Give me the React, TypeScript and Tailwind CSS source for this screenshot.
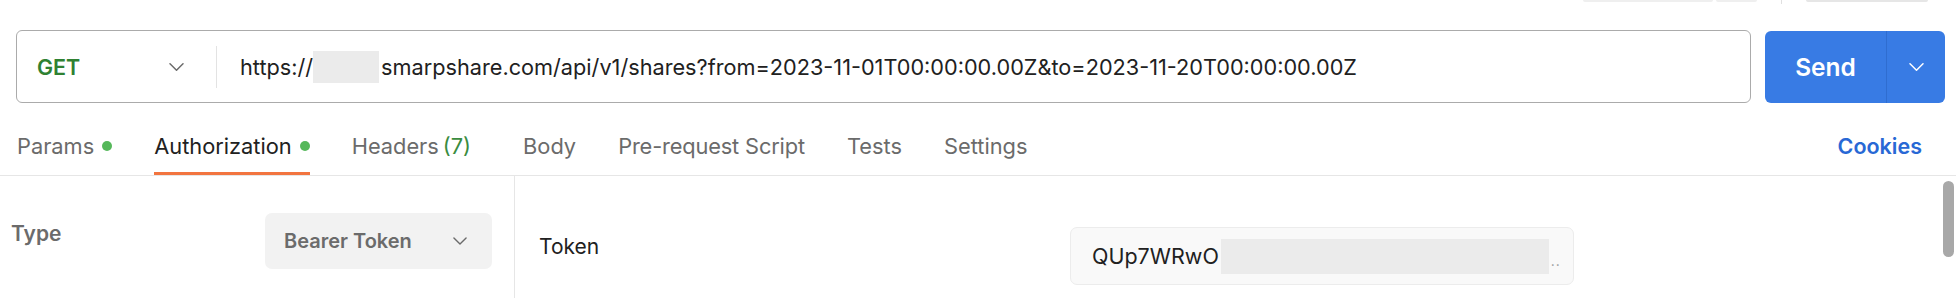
import React from "react";

function Chevron({ color, w = 15, h = 8 }: { color: string; w?: number; h?: number }) {
  return (
    <svg width={w} height={h} viewBox="0 0 15 8" fill="none">
      <polyline points="1,0.8 7.5,7.2 14,0.8" stroke={color} strokeWidth="1.5" strokeLinecap="round" strokeLinejoin="round" />
    </svg>
  );
}

function Tab({ label, active, dot, extra, tight }: { label: string; active?: boolean; dot?: boolean; extra?: React.ReactNode; tight?: boolean }) {
  return (
    <div
      className={`flex h-[55px] items-center border-b-[3px] ${active ? "border-[#f2743f] text-[#212121]" : "border-transparent text-[#6b6b6b]"}`}
    >
      <span className={`text-[21.8px] leading-[30px] ${tight ? "tracking-[-0.15px]" : ""}`}>{label}</span>
      {extra}
      {dot && <span className="ml-[8px] h-[10px] w-[10px] rounded-full bg-[#55b85a]" />}
    </div>
  );
}

export default function App() {
  return (
    <div
      className="relative h-[298px] w-[1956px] overflow-hidden bg-white"
      style={{ fontFamily: "Inter, 'Noto Sans', sans-serif" }}
    >
      {/* top strip: bottoms of buttons above */}
      <div className="flex h-[30px] items-start justify-end pr-[28px]">
        <div className="h-[2px] w-[130px] rounded-b-[3px] bg-[#efefef]" />
        <div className="ml-[3px] h-[2px] w-[41px] rounded-b-[3px] bg-[#efefef]" />
        <div className="ml-[24px] h-[4px] w-px bg-[#e0e0e0]" />
        <div className="ml-[24px] h-[2px] w-[122px] rounded-b-[3px] bg-[#e6e6e6]" />
      </div>

      {/* request row */}
      <div className="flex items-start pl-[16px]">
        <div className="flex h-[73px] w-[1735px] items-center rounded-[6px] border border-[#ababab]">
          <div className="flex w-[199px] items-center pl-[20px]">
            <span className="text-[21.5px] font-semibold leading-[30px] text-[#2f8132]">GET</span>
            <span className="ml-auto mr-[32px] flex">
              <Chevron color="#6b6b6b" />
            </span>
          </div>
          <div className="h-[42px] w-px bg-[#e3e3e3]" />
          <div className="flex items-center pl-[23px] text-[21.7px] leading-[30px] text-[#212121]">
            <span>https://</span>
            <span className="h-[32px] w-[66px] bg-[#ebebeb]" />
            <span className="ml-[2px]">smarpshare.com/api/v1/shares?from=2023-11-01T00:00:00.00Z&amp;to=2023-11-20T00:00:00.00Z</span>
          </div>
        </div>
        <div className="ml-[14px] mt-px flex h-[72px] w-[180px] rounded-[6px] bg-[#387be4]">
          <div className="flex w-[121px] items-center justify-center">
            <span className="text-[24.5px] font-semibold leading-[30px] text-white">Send</span>
          </div>
          <div className="w-px bg-[#2f6dd0]" />
          <div className="flex flex-1 items-center justify-center">
            <Chevron color="#ffffff" />
          </div>
        </div>
      </div>

      {/* tabs row */}
      <div className="flex h-[73px] items-end border-b border-[#e6e6e6] pl-[17px] pr-[34px]">
        <div className="flex items-end gap-[42px]">
          <Tab label="Params" dot />
          <Tab label="Authorization" active dot />
          <div className="mr-[10px]">
            <Tab
              label="Headers"
              extra={<span className="ml-[4px] text-[21.8px] leading-[30px] text-[#3a8c3f]">(7)</span>}
            />
          </div>
          <Tab label="Body" />
          <Tab label="Pre-request Script" tight />
          <Tab label="Tests" />
          <Tab label="Settings" />
        </div>
        <div className="ml-auto flex h-[55px] items-center pb-[3px]">
          <span className="text-[21.5px] font-semibold leading-[30px] text-[#2868d5]">Cookies</span>
        </div>
      </div>

      {/* content */}
      <div className="flex h-[122px]">
        <div className="flex w-[515px] items-start border-r border-[#e6e6e6] pl-[11px] pr-[22px] pt-[37px]">
          <span className="mt-[6px] text-[21px] font-semibold leading-[30px] text-[#6b6b6b]">Type</span>
          <div className="ml-auto flex h-[56px] w-[227px] items-center rounded-[7px] bg-[#f2f2f2] pl-[19px] pr-[25px]">
            <span className="text-[20px] font-semibold leading-[30px] text-[#6b6b6b]">Bearer Token</span>
            <span className="ml-auto flex">
              <Chevron color="#6b6b6b" w={14} h={8} />
            </span>
          </div>
        </div>
        <div className="flex flex-1 items-start pl-[24px] pt-[51px]">
          <div className="w-[531px] pt-[5px]">
            <span className="text-[21px] leading-[30px] text-[#212121]">Token</span>
          </div>
          <div className="flex h-[58px] w-[504px] items-center rounded-[7px] border border-[#ececec] bg-[#f9f9f9] pl-[21px]">
            <span className="text-[21.5px] leading-[30px] text-[#212121]">QUp7WRwO</span>
            <span className="ml-[2px] h-[35px] w-[328px] bg-[#ebebeb]" />
            <span className="ml-[2px] mt-[10px] text-[14px] leading-[14px] tracking-[1px] text-[#9a9a9a]">..</span>
          </div>
        </div>
      </div>

      {/* scrollbar overlay */}
      <div className="absolute left-[1943px] top-[181px] h-[76px] w-[11px] rounded-full bg-[#a8a8a8]" />
    </div>
  );
}
